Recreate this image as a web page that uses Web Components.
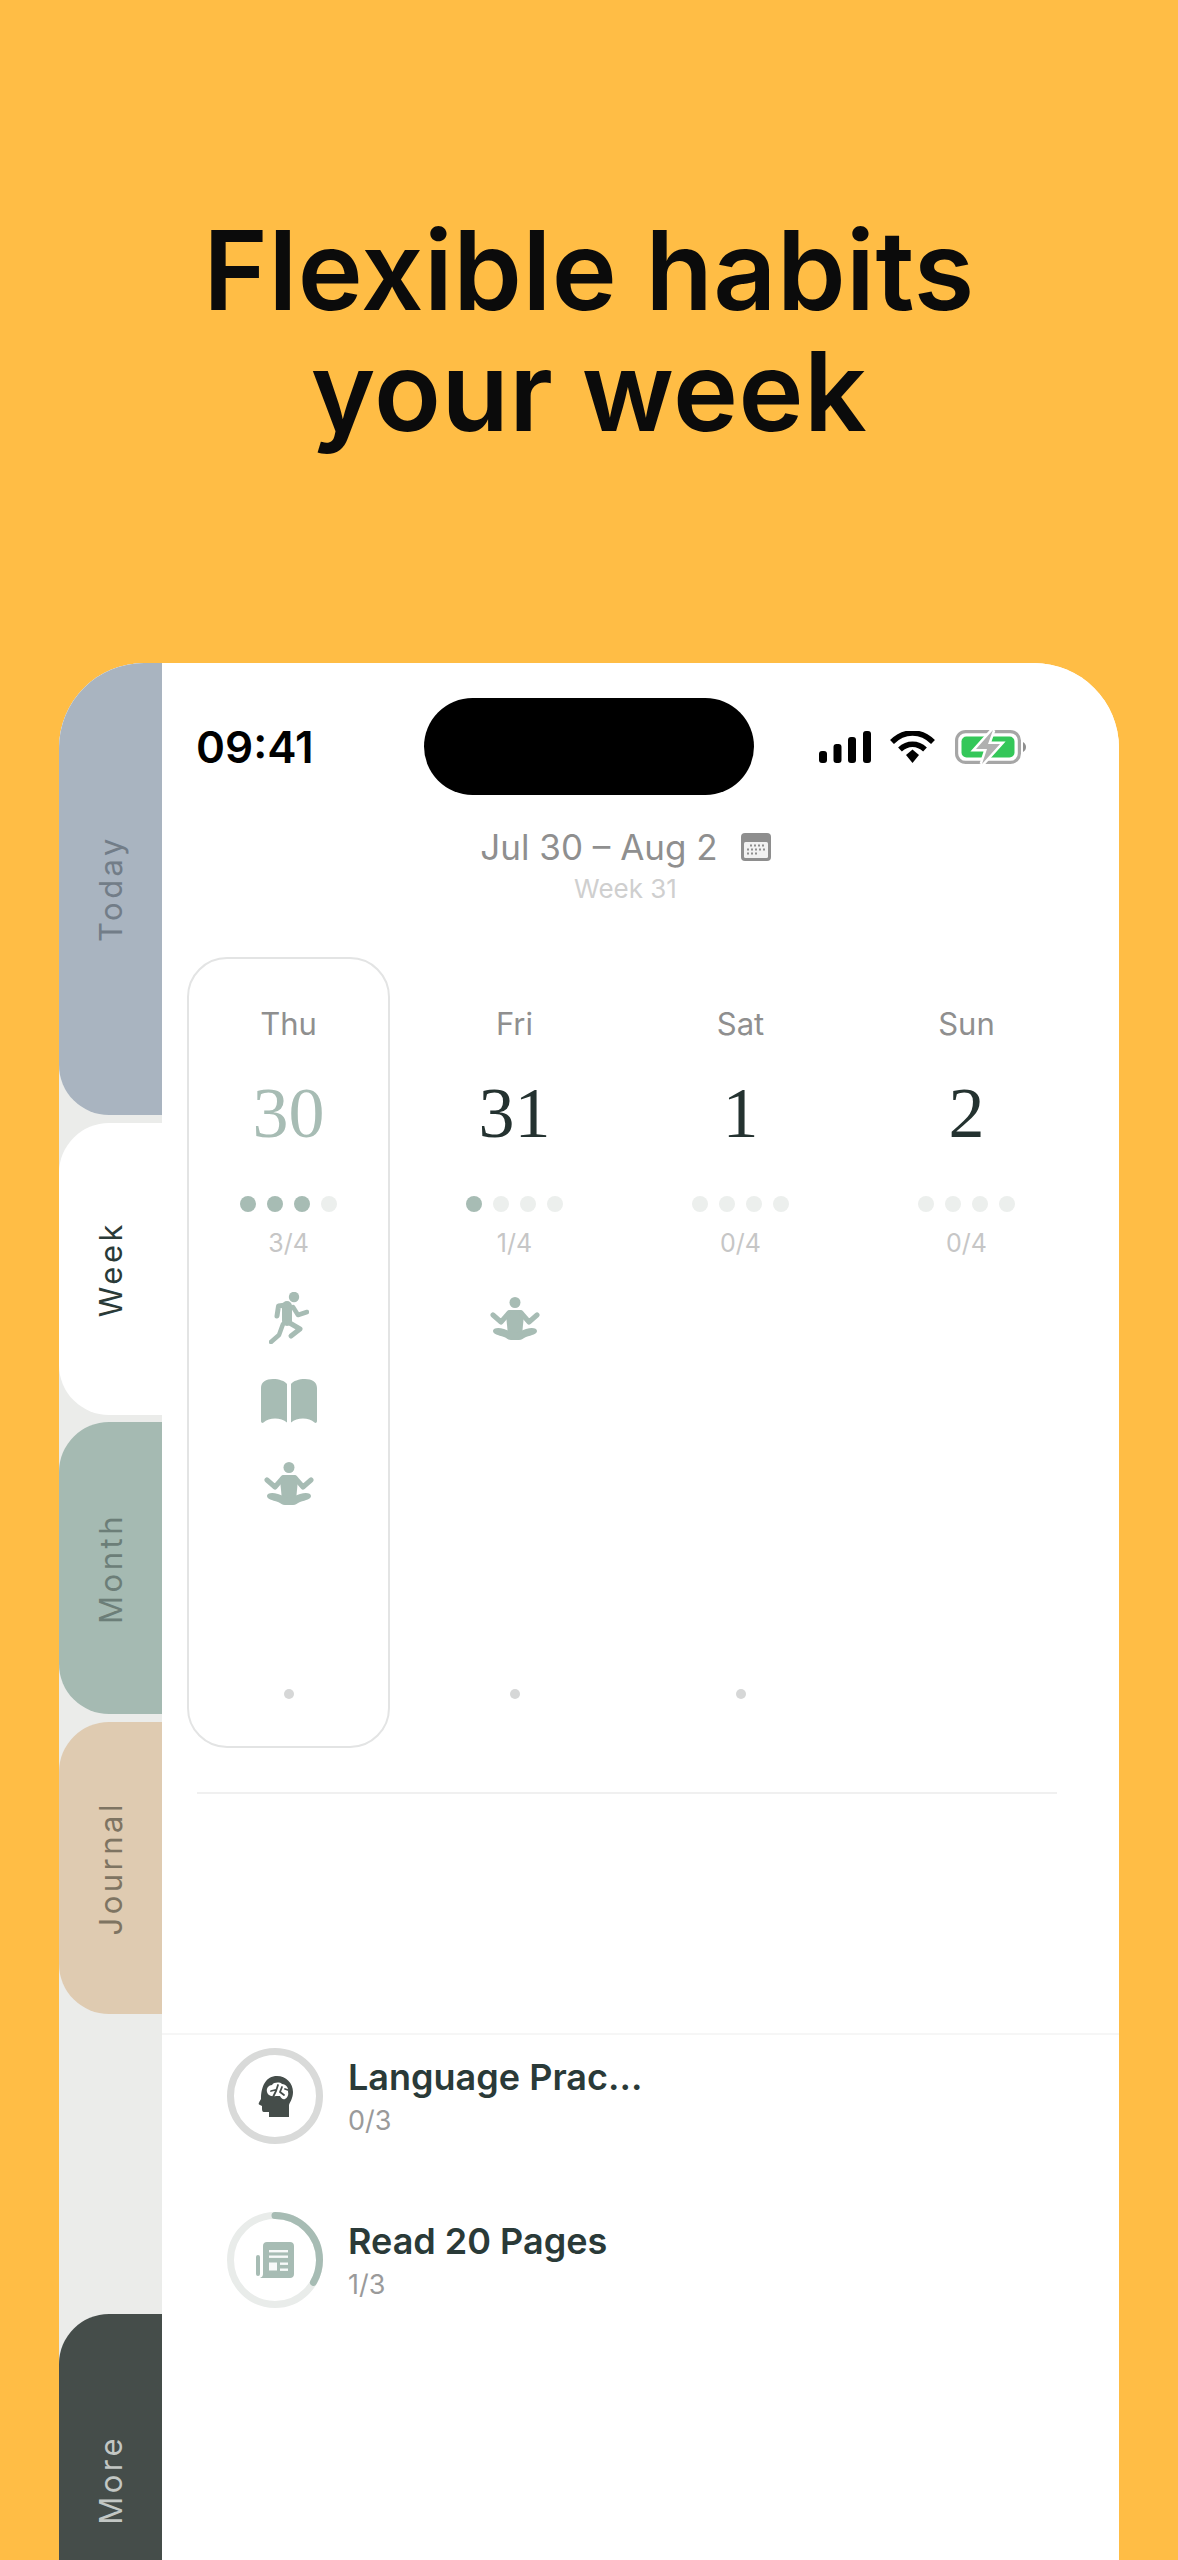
<!DOCTYPE html>
<html lang="en">
<head>
<meta charset="utf-8">
<title>Flexible habits your week</title>
<style>
    html, body {
        margin: 0;
        padding: 0;
        background: #ffbd45;
    }
    body {
        width: 1178px;
        height: 2560px;
        overflow: hidden;
        font-family: Inter, sans-serif;
    }
</style>
</head>
<body>
<store-page>
    <span slot="title">Flexible habits<br>your week</span>
    <phone-frame>
        <side-tab slot="rail" bg="#a9b4c0" fg="#727d88" size="452">Today</side-tab>
        <side-tab slot="rail" bg="#ffffff" fg="#2a3a38" size="292" gap="8">Week</side-tab>
        <side-tab slot="rail" bg="#a5bab2" fg="#6c7e78" size="292" gap="7">Month</side-tab>
        <side-tab slot="rail" bg="#dfcbb1" fg="#7e7462" size="292" gap="8">Journal</side-tab>
        <side-tab slot="rail" bg="#454d4a" fg="#c2c7c4" size="332" gap="300">More</side-tab>

        <status-bar></status-bar>
        <week-header>
            <span slot="range">Jul 30 – Aug 2</span>
            <span slot="week">Week 31</span>
        </week-header>
        <week-grid>
            <day-column day="Thu" date="30" done="3" selected tick>
                <habit-icon name="run"></habit-icon>
                <habit-icon name="book"></habit-icon>
                <habit-icon name="mind"></habit-icon>
            </day-column>
            <day-column day="Fri" date="31" done="1" tick>
                <habit-icon name="mind"></habit-icon>
            </day-column>
            <day-column day="Sat" date="1" done="0" tick></day-column>
            <day-column day="Sun" date="2" done="0"></day-column>
        </week-grid>
        <habit-list>
            <habit-row icon="head" progress="0" label="0/3">Language Prac...</habit-row>
            <habit-row icon="news" progress="1" label="1/3">Read 20 Pages</habit-row>
        </habit-list>
    </phone-frame>
</store-page>

<script>
const ICONS = {
    run: `<svg width="40" height="52" viewBox="0 0 40 52" fill="none" stroke="currentColor" stroke-linecap="round" stroke-linejoin="round">
            <circle cx="25" cy="5" r="5.200" fill="currentColor" stroke="none"/>
            <path d="M18 14 L18 29" stroke-width="10"/>
            <path d="M17 13 L9.500 14 L8 24" stroke-width="5"/>
            <path d="M24 15 L29 23 L38 20" stroke-width="4.500"/>
            <path d="M14 32 L10 43 L2 50" stroke-width="4.500"/>
            <path d="M19 30 L31 37 L22 44" stroke-width="5"/>
        </svg>`,
    book: `<svg width="56" height="44" viewBox="0 0 56 44" fill="currentColor">
            <path d="M0 9 C0 3 5 0 12 0 C18 0 24 2 26 5 L26 43.500 C20 38 8 38 2.500 43.500 C1 44.500 0 43.500 0 42 Z"/>
            <path d="M56 9 C56 3 51 0 44 0 C38 0 32 2 30 5 L30 43.500 C36 38 48 38 53.500 43.500 C55 44.500 56 43.500 56 42 Z"/>
        </svg>`,
    mind: `<svg width="50" height="43" viewBox="0 0 50 43" fill="currentColor">
            <circle cx="25" cy="5.500" r="5.500"/>
            <path d="M20 13 L30 13 C33 13 34 15 34 18 L32 38 L18 38 L16 18 C16 15 17 13 20 13 Z"/>
            <path d="M3 18 L11 25 L18 17 M47 18 L39 25 L32 17" fill="none" stroke="currentColor" stroke-width="5" stroke-linecap="round" stroke-linejoin="round"/>
            <path d="M3 34 C3 31 8 30 14 32 L25 36 L36 32 C42 30 47 31 47 34 C47 37 42 38 36 40 C33 41 32 43 29 43 L21 43 C18 43 17 41 14 40 C8 38 3 37 3 34 Z"/>
        </svg>`,
    head: `<svg width="35" height="41" viewBox="0 0 35 41">
            <path fill="#454d4a" d="M19 0 C28 0 35 7 35 16 C35 22 32 26 31 29 L31 41 L11 41 L11 36 L6 36 C4 36 4 34 4 32 L4 30 L1 28.500 C0 27.500 2 25 3 23 C3 10 8 0 19 0 Z"/>
            <path fill="#fff" d="M9 16 C8 12 11 9 14 9 C16 6 22 6 24 8 C28 8 31 12 30 16 C31 19 29 22 27 23 C25 24 23 22 22 20 L18 20 C15 21 10 20 9 16 Z"/>
            <path fill="none" stroke="#454d4a" stroke-width="1.800" stroke-linecap="round" stroke-linejoin="round"
                d="M13 15 L17 14 M20 9 L18 15 L15 21 M24 11 L22 16 L26 19 M27 13 L30 14"/>
        </svg>`,
    news: `<svg width="38" height="36" viewBox="0 0 38 36">
            <rect x="0" y="13" width="4" height="21" rx="2" fill="#a7bcb4"/>
            <path fill="#a7bcb4" d="M7 4 C7 1.500 8.500 0 11 0 L34 0 C36.500 0 38 1.500 38 4 L38 32 C38 34.500 36.500 36 34 36 L4 36 C6 35 7 34 7 32 Z"/>
            <g fill="#fff" opacity=".92">
                <rect x="13" y="8" width="19" height="2.400"/>
                <rect x="13" y="13.500" width="19" height="2.400"/>
                <rect x="13" y="20.500" width="8" height="8"/>
                <rect x="24" y="20.500" width="8" height="2.400"/>
                <rect x="24" y="26.500" width="8" height="2.400"/>
            </g>
        </svg>`
};

class StorePage extends HTMLElement {
    constructor() {
        super();
        this.shadow = this.attachShadow({mode: 'open'});
    }

    connectedCallback() {
        this.shadow.innerHTML = `
            <style>
                :host {
                    display: block;
                    width: 1178px;
                    height: 2560px;
                    background: #ffbd45;
                }
                header {
                    height: 663px;
                    box-sizing: border-box;
                    padding-top: 210px;
                    text-align: center;
                    font-family: Inter, sans-serif;
                    font-weight: 600;
                    font-size: 110px;
                    line-height: 121px;
                    letter-spacing: 0.500px;
                    color: #0b0b0b;
                }
            </style>
            <header><slot name="title"></slot></header>
            <slot></slot>
        `;
    }
}

class PhoneFrame extends HTMLElement {
    constructor() {
        super();
        this.shadow = this.attachShadow({mode: 'open'});
    }

    connectedCallback() {
        this.shadow.innerHTML = `
            <style>
                :host {
                    display: flex;
                    width: 1060px;
                    height: 1897px;
                    margin-left: 59px;
                    border-radius: 85px 85px 0 0;
                    overflow: hidden;
                    background: #fff;
                }
                .rail {
                    flex: 0 0 103px;
                    display: flex;
                    flex-direction: column;
                    background: #ebecea;
                }
                .panel {
                    flex: 1;
                    min-width: 0;
                    display: flex;
                    flex-direction: column;
                    background: #fff;
                }
            </style>
            <div class="rail"><slot name="rail"></slot></div>
            <div class="panel"><slot></slot></div>
        `;
    }
}

class SideTab extends HTMLElement {
    constructor() {
        super();
        this.shadow = this.attachShadow({mode: 'open'});
    }

    connectedCallback() {
        this.shadow.innerHTML = `
            <style>
                :host {
                    display: flex;
                    flex: none;
                    align-items: center;
                    justify-content: center;
                    height: ${this.getAttribute('size')}px;
                    margin-top: ${this.getAttribute('gap') || 0}px;
                    border-radius: 50px 0 0 50px;
                    background: ${this.getAttribute('bg')};
                    color: ${this.getAttribute('fg')};
                    font-family: Inter, sans-serif;
                    font-size: 31px;
                    letter-spacing: 3.500px;
                }
                span {
                    writing-mode: vertical-rl;
                    transform: rotate(180deg);
                    white-space: nowrap;
                }
            </style>
            <span><slot></slot></span>
        `;
    }
}

class StatusBar extends HTMLElement {
    constructor() {
        super();
        this.shadow = this.attachShadow({mode: 'open'});
    }

    connectedCallback() {
        this.shadow.innerHTML = `
            <style>
                :host {
                    display: grid;
                    grid-template-columns: 262px 330px 1fr;
                    align-items: center;
                    padding-top: 35px;
                }
                time {
                    padding-left: 34px;
                    font: 600 44px/1 Inter, sans-serif;
                    color: #000;
                }
                .island {
                    height: 97px;
                    border-radius: 49px;
                    background: #000;
                }
                .icons {
                    display: flex;
                    align-items: center;
                    padding-left: 65px;
                    gap: 19px;
                }
                svg { display: block; }
            </style>
            <time>09:41</time>
            <div class="island"></div>
            <div class="icons">
                <svg width="52" height="32" viewBox="0 0 52 32" fill="#000">
                    <rect x="0" y="20" width="8" height="12" rx="3"/>
                    <rect x="14.500" y="13" width="8" height="19" rx="3"/>
                    <rect x="29" y="6" width="8" height="26" rx="3"/>
                    <rect x="44" y="0" width="8" height="32" rx="3"/>
                </svg>
                <svg width="45" height="32" viewBox="0 0 45 32" fill="none" stroke="#000" stroke-width="5.500">
                    <path d="M2 11 C14 -1 31 -1 43 11"/>
                    <path d="M10 18.500 C17.500 11.500 27.500 11.500 35 18.500"/>
                    <path d="M16 24 L22.500 18.500 L29 24 L22.500 32 Z" fill="#000" stroke="none"/>
                </svg>
                <svg width="72" height="34" viewBox="0 0 72 34" style="margin-left:1px">
                    <rect x="1.600" y="1.600" width="62.800" height="30.800" rx="9" fill="#fff" stroke="#a6a6a6" stroke-width="3.200"/>
                    <rect x="6.500" y="6.500" width="53" height="21" rx="5" fill="#34c759"/>
                    <path d="M68 12 C70 13 71 15 71 17 C71 19 70 21 68 22 Z" fill="#8f8f8f"/>
                    <polygon points="38,0 21,19 32,19 27,34 45,14 33,14" fill="#b0b0b0" stroke="#fff" stroke-width="5" paint-order="stroke"/>
                </svg>
            </div>
        `;
    }
}

class WeekHeader extends HTMLElement {
    constructor() {
        super();
        this.shadow = this.attachShadow({mode: 'open'});
    }

    connectedCallback() {
        this.shadow.innerHTML = `
            <style>
                :host {
                    display: flex;
                    flex-direction: column;
                    align-items: center;
                    height: 162px;
                    padding: 32px 30px 0 0;
                    box-sizing: border-box;
                    font-family: Inter, sans-serif;
                }
                .range {
                    display: flex;
                    align-items: center;
                    gap: 23px;
                    font-size: 35px;
                    line-height: 40px;
                    color: #8f8f8f;
                }
                .week {
                    margin-top: 7px;
                    font-size: 26px;
                    line-height: 30px;
                    color: #cfcfcf;
                }
                svg { display: block; }
            </style>
            <div class="range">
                <slot name="range"></slot>
                <svg width="30" height="28" viewBox="0 0 30 28">
                    <rect width="30" height="28" rx="4" fill="#8e8e8e"/>
                    <rect x="3" y="9" width="24" height="16" rx="1.500" fill="#f1f1f1"/>
                    <g fill="#8e8e8e">
                        <rect x="9" y="11.500" width="2" height="2"/><rect x="13" y="11.500" width="2" height="2"/><rect x="17" y="11.500" width="2" height="2"/><rect x="21" y="11.500" width="2" height="2"/>
                        <rect x="6" y="15.500" width="2" height="2"/><rect x="10" y="15.500" width="2" height="2"/><rect x="14" y="15.500" width="2" height="2"/><rect x="18" y="15.500" width="2" height="2"/><rect x="22" y="15.500" width="2" height="2"/>
                        <rect x="6" y="19.500" width="2" height="2"/><rect x="10" y="19.500" width="2" height="2"/><rect x="14" y="19.500" width="2" height="2"/>
                    </g>
                </svg>
            </div>
            <div class="week"><slot name="week"></slot></div>
        `;
    }
}

class WeekGrid extends HTMLElement {
    constructor() {
        super();
        this.shadow = this.attachShadow({mode: 'open'});
    }

    connectedCallback() {
        this.shadow.innerHTML = `
            <style>
                :host {
                    display: block;
                    padding-left: 25px;
                }
                .days {
                    display: grid;
                    grid-template-columns: repeat(4, 226px);
                }
                hr {
                    height: 2px;
                    border: 0;
                    margin: 44px 62px 0 10px;
                    background: #f0f0f0;
                }
            </style>
            <div class="days"><slot></slot></div>
            <hr>
        `;
    }
}

class DayColumn extends HTMLElement {
    constructor() {
        super();
        this.shadow = this.attachShadow({mode: 'open'});
    }

    connectedCallback() {
        const done = Number(this.getAttribute('done'));
        const selected = this.hasAttribute('selected');
        const dots = [0, 1, 2, 3].map(i => `<i class="${i < done ? 'on' : ''}"></i>`).join('');

        this.shadow.innerHTML = `
            <style>
                :host {
                    display: block;
                    font-family: Inter, sans-serif;
                }
                .card {
                    display: flex;
                    flex-direction: column;
                    align-items: center;
                    width: 203px;
                    height: 791px;
                    box-sizing: border-box;
                    padding-top: 47px;
                    border: 2px solid ${selected ? '#e3e4e4' : 'transparent'};
                    border-radius: 40px;
                }
                .day {
                    font-size: 31px;
                    line-height: 36px;
                    color: #8f8f8f;
                }
                .date {
                    margin-top: 31px;
                    font: 72px/80px "Liberation Serif", serif;
                    color: ${selected ? '#a7bcb4' : '#243230'};
                }
                .dots {
                    display: flex;
                    gap: 11px;
                    margin-top: 43px;
                }
                .dots i {
                    width: 16px;
                    height: 16px;
                    border-radius: 50%;
                    background: #ecefed;
                }
                .dots i.on { background: #a7bcb4; }
                .count {
                    margin-top: 16px;
                    font-size: 25px;
                    line-height: 30px;
                    color: #c6c6c6;
                }
                .icons {
                    display: flex;
                    flex-direction: column;
                    align-items: center;
                    margin-top: 19px;
                    color: #a7bcb4;
                }
                .tick {
                    width: 10px;
                    height: 10px;
                    margin-top: auto;
                    margin-bottom: 47px;
                    border-radius: 50%;
                    background: ${this.hasAttribute('tick') ? '#d6d7d7' : 'transparent'};
                }
            </style>
            <div class="card">
                <div class="day">${this.getAttribute('day')}</div>
                <div class="date">${this.getAttribute('date')}</div>
                <div class="dots">${dots}</div>
                <div class="count">${done}/4</div>
                <div class="icons"><slot></slot></div>
                <div class="tick"></div>
            </div>
        `;
    }
}

class HabitIcon extends HTMLElement {
    constructor() {
        super();
        this.shadow = this.attachShadow({mode: 'open'});
    }

    connectedCallback() {
        this.shadow.innerHTML = `
            <style>
                :host {
                    display: flex;
                    align-items: center;
                    justify-content: center;
                    height: 82.500px;
                }
                svg { display: block; }
            </style>
            ${ICONS[this.getAttribute('name')]}
        `;
    }
}

class HabitList extends HTMLElement {
    constructor() {
        super();
        this.shadow = this.attachShadow({mode: 'open'});
    }

    connectedCallback() {
        this.shadow.innerHTML = `
            <style>
                :host {
                    display: flex;
                    flex-direction: column;
                    gap: 68px;
                    margin-top: 239px;
                    padding: 13px 0 0 65px;
                    border-top: 2px solid #f6f6f6;
                }
            </style>
            <slot></slot>
        `;
    }
}

class HabitRow extends HTMLElement {
    constructor() {
        super();
        this.shadow = this.attachShadow({mode: 'open'});
    }

    connectedCallback() {
        const started = Number(this.getAttribute('progress')) > 0;
        const c = 2 * Math.PI * 44.5;

        this.shadow.innerHTML = `
            <style>
                :host {
                    display: flex;
                    align-items: center;
                    gap: 25px;
                    font-family: Inter, sans-serif;
                }
                .ring {
                    position: relative;
                    display: flex;
                    align-items: center;
                    justify-content: center;
                    width: 96px;
                    height: 96px;
                }
                .ring > svg:first-child {
                    position: absolute;
                    inset: 0;
                    transform: rotate(-90deg);
                }
                .title {
                    font-size: 36px;
                    font-weight: 600;
                    line-height: 44px;
                    color: #2a3a38;
                }
                .label {
                    margin-top: 6px;
                    font-size: 27px;
                    line-height: 32px;
                    color: #9a9a9a;
                }
            </style>
            <div class="ring">
                <svg width="96" height="96" viewBox="0 0 96 96" fill="none" stroke-width="7">
                    <circle cx="48" cy="48" r="44.500" stroke="${started ? '#e9ecea' : '#d9dad9'}"/>
                    ${started ? `<circle cx="48" cy="48" r="44.500" stroke="#a7bcb4" stroke-linecap="round" stroke-dasharray="${c / 3} ${c}"/>` : ''}
                </svg>
                ${ICONS[this.getAttribute('icon')]}
            </div>
            <div>
                <div class="title"><slot></slot></div>
                <div class="label">${this.getAttribute('label')}</div>
            </div>
        `;
    }
}

window.customElements.define('store-page', StorePage);
window.customElements.define('phone-frame', PhoneFrame);
window.customElements.define('side-tab', SideTab);
window.customElements.define('status-bar', StatusBar);
window.customElements.define('week-header', WeekHeader);
window.customElements.define('week-grid', WeekGrid);
window.customElements.define('day-column', DayColumn);
window.customElements.define('habit-icon', HabitIcon);
window.customElements.define('habit-list', HabitList);
window.customElements.define('habit-row', HabitRow);
</script>
</body>
</html>
